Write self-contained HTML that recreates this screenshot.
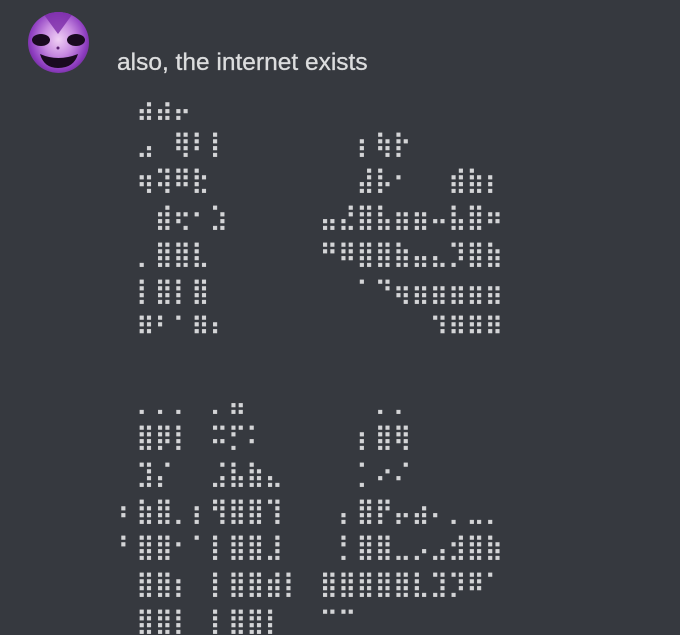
<!DOCTYPE html>
<html><head><meta charset="utf-8">
<style>
html,body{margin:0;padding:0;background:#36393f;width:680px;height:635px;overflow:hidden;position:relative}
.av{position:absolute;left:28px;top:12px;width:61px;height:61px;border-radius:50%;overflow:hidden;
background:radial-gradient(ellipse at 50% 45%,#f0d0f5 0%,#c78ae0 35%,#8d3cc0 65%,#3a1550 100%)}
.msg{position:absolute;left:117px;top:49px;font-family:"Liberation Sans",sans-serif;font-size:24.5px;color:#dcddde;white-space:nowrap;-webkit-text-stroke:0.3px #dcddde}
pre{position:absolute;left:118px;top:89px;margin:0;font-family:"DejaVu Sans","DejaVu Sans Mono",monospace;font-size:24.5px;letter-spacing:0.4px;line-height:36.7px;color:#d4d5d7;-webkit-text-stroke:0.5px #d4d5d7}
</style></head><body>
<div class="av">
<svg width="61" height="61" viewBox="0 0 61 61">
<path d="M14 0 L30 22 L46 0 Z" fill="#7a2aa8" opacity=".8"/>
<ellipse cx="13" cy="28" rx="9" ry="6" fill="#1a0a20"/>
<ellipse cx="48" cy="28" rx="9" ry="6" fill="#1a0a20"/>
<path d="M12 42 Q30 50 50 42 Q46 56 30 56 Q16 56 12 42Z" fill="#1a0a20"/>
<circle cx="30" cy="36" r="1.5" fill="#5a2070"/>
</svg>
</div>
<div class="msg">also, the internet exists</div>
<pre>⠀⣴⣴⡤
⠀⣠⠀⢿⠇⡇⠀⠀⠀⠀⠀⠀⠀⡆⢷⡗
⠀⢶⢽⠿⣗⠀⠀⠀⠀⠀⠀⠀⠀⣼⡧⠂⠀⠀⣾⣷⡆
⠀⠀⣾⢖⠂⣱⠀⠀⠀⠀⠀⣤⣜⣿⣧⣶⣶⠤⣧⣿⠶
⠀⡀⣿⣿⣇⠀⠀⠀⠀⠀⠀⠛⠿⣿⣿⣷⣤⣄⡹⣿⣷
⠀⡇⣿⡇⣿⠀⠀⠀⠀⠀⠀⠀⠀⠁⠙⢶⣶⣶⣶⣶⣶
⠀⠿⠃⠁⠿⠆⠀⠀⠀⠀⠀⠀⠀⠀⠀⠀⠀⠹⠿⠿⠿
⠀
⠀⡀⡀⡀⠀⡀⣤⠀⠀⠀⠀⠀⠀⠀⡀⡀
⠀⣿⡿⡇⠀⠭⡋⠅⠀⠀⠀⠀⠀⡆⣿⢿
⠀⣹⡌⠀⠀⣨⣧⣷⣄⠀⠀⠀⠀⡁⠔⠌
⠆⣷⣿⡀⡆⢻⣿⣿⢹⠀⠀⠀⡄⣿⡟⡤⣴⠄⡀⣀⡀
⠃⣿⣿⠂⠁⡇⣿⣿⣸⠀⠀⠀⡃⣿⣿⣀⡠⣠⣺⣿⣷
⠀⣿⣿⡆⠀⡇⣿⣿⣾⡇⠀⣿⣿⣿⣿⣿⣇⣹⡹⠿⠁
⠀⣿⣿⡇⠀⡇⣿⣿⡇⠀⠀⠉⠉</pre>
</body></html>
